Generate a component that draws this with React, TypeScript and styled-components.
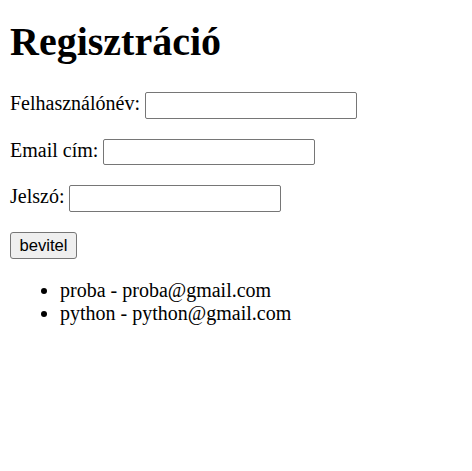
import React from "react";
import styled, { createGlobalStyle } from "styled-components";

const Global = createGlobalStyle`
  html, body { background: #ffffff; }
  body {
    margin: 0;
    padding: 10px;
    font-family: "Liberation Serif", "Times New Roman", serif;
    font-size: 20px;
    color: #000000;
  }
`;

const Title = styled.h1`
  font-size: 40px;
  font-weight: 700;
  margin: 8px 0 27px;
  line-height: normal;
`;

const Form = styled.form`
  margin: 0;
`;

const Row = styled.p`
  margin: 20px 0;
  line-height: normal;
`;

const Label = styled.label`
  font: inherit;
`;

const TextInput = styled.input`
  box-sizing: border-box;
  width: 212px;
  height: 26.67px;
  margin: 0;
  padding: 1px 3px;
  border: 1px solid #767676;
  border-radius: 2px;
  background: #ffffff;
  font-family: "Liberation Sans", Arial, sans-serif;
  font-size: 16.67px;
  vertical-align: baseline;
`;

const SubmitButton = styled.button`
  box-sizing: border-box;
  width: 67px;
  height: 27.5px;
  margin: 0;
  padding: 1px 7px;
  border: 1px solid #767676;
  border-radius: 3px;
  background: #efefef;
  color: #000000;
  font-family: "Liberation Sans", Arial, sans-serif;
  font-size: 16.67px;
`;

const List = styled.ul`
  margin: 20px 0;
  padding-left: 50px;
  list-style: disc;
`;

const Item = styled.li`
  line-height: normal;
`;

const users = [
  { name: "proba", email: "proba@gmail.com" },
  { name: "python", email: "python@gmail.com" },
];

export default function App() {
  return (
    <>
      <Global />
      <Title>Regisztráció</Title>
      <Form onSubmit={(e) => e.preventDefault()}>
        <Row>
          <Label htmlFor="user">Felhasználónév:</Label> <TextInput id="user" type="text" />
        </Row>
        <Row>
          <Label htmlFor="email">Email cím:</Label> <TextInput id="email" type="email" />
        </Row>
        <Row>
          <Label htmlFor="pw">Jelszó:</Label> <TextInput id="pw" type="password" />
        </Row>
        <SubmitButton type="submit">bevitel</SubmitButton>
      </Form>
      <List>
        {users.map((u) => (
          <Item key={u.name}>
            {u.name} - {u.email}
          </Item>
        ))}
      </List>
    </>
  );
}
